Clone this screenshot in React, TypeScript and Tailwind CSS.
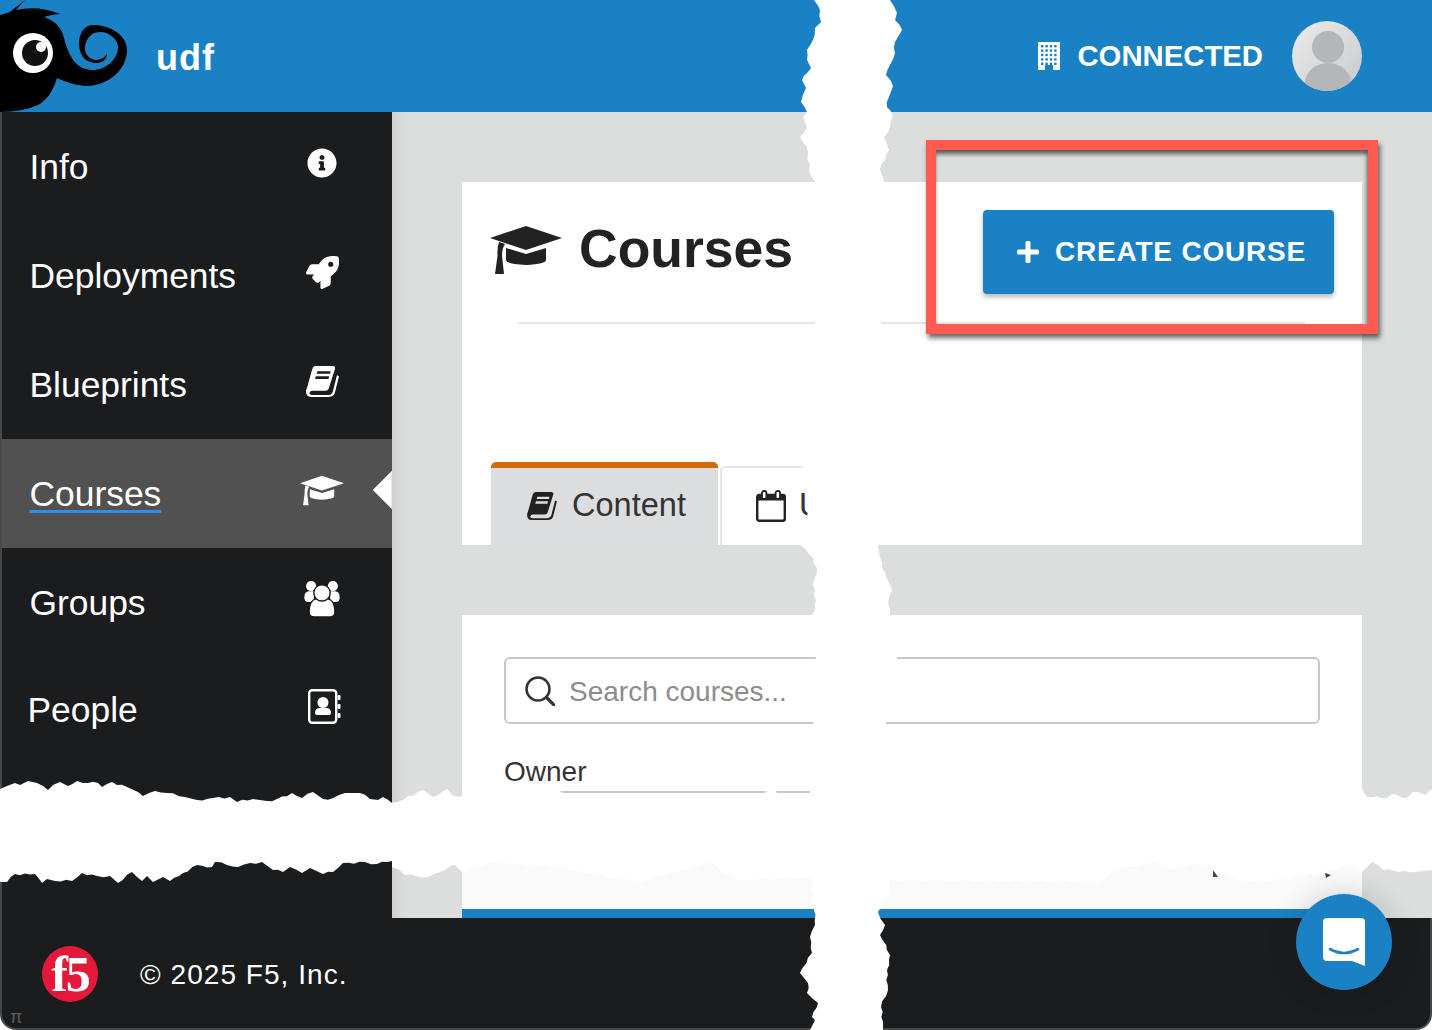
import { FaInfoCircle, FaRocket } from "react-icons/fa";
import type { ReactNode } from "react";

/* Screenshot of the Courses page, annotated: red box over the create button, torn strips over the page. */

function Mascot() {
  return (
    <svg viewBox="0 0 130 112" className="h-[112px] w-[130px] shrink-0">
      <path
        fill="#000"
        d="M0 15L10 12L16 7L25 0L16 10Q38 5 60 14Q50 15 44 17Q60 22 64 38C70 62 80 70 93 70C105 70 118 60 118 47C118 40 110 32 100 32C92 32 86 38 85 47C84 52 88 59 95 60C100 60 105 58 107 53C107 62 100 63 95 63C85 62 79 55 79 43C79 33 85 25 93 25C110 25 127 35 127 50C127 72 105 86 87 86C80 86 70 84 57 78Q52 96 40 104Q24 112 0 112Z"
      />
      <circle cx="33" cy="53" r="20" fill="#fff" />
      <circle cx="35" cy="53" r="13" fill="#111" />
      <circle cx="41" cy="47" r="5" fill="#fff" />
    </svg>
  );
}

function BuildingIcon() {
  const dots = [];
  for (let r = 0; r < 5; r++) {
    for (let c = 0; c < 4; c++) {
      dots.push(<rect key={`${r}-${c}`} x={3 + c * 4.4} y={3 + r * 4.4} width="2.4" height="2.4" fill="#1a82c4" />);
    }
  }
  return (
    <svg viewBox="0 0 22 28" className="h-[28px] w-[22px] shrink-0">
      <rect width="22" height="28" fill="#fff" />
      {dots}
      <rect x="7" y="23" width="8" height="5" fill="#1a82c4" />
    </svg>
  );
}

function BookIcon({ className }: { className: string }) {
  return (
    <svg viewBox="0 0 32 30" className={className}>
      <path
        fill="currentColor"
        fillRule="evenodd"
        d="M9 0H26Q29 0 28 3L22 22Q21 24 19 24H6Q4 24 3.5 26Q3 28 6 28H22Q25 28 26 25L30 9L32 10L28 26Q27 30 22 30H5Q0 30 0 25Q0 23 1 21L6 3Q7 0 9 0ZM11 5L10.3 7.5H23.3L24 5ZM9.5 10L8.8 12.5H21.8L22.5 10Z"
      />
    </svg>
  );
}

function CapIcon({ className }: { className: string }) {
  return (
    <svg viewBox="0 0 72 48" className={className}>
      <path fill="currentColor" d="M36 0L72 12L36 24L0 12Z" />
      <path fill="currentColor" d="M16 22L36 28L56 22V34Q56 38 36 39Q16 38 16 34Z" />
      <path fill="currentColor" d="M9 16L15 18Q12 22 12 30L14 48H5L7.5 30Q7 22 9 16Z" />
    </svg>
  );
}

function GroupIcon() {
  return (
    <svg viewBox="0 0 104 106" className="h-[36px] w-[38px]">
      <circle cx="20" cy="15" r="15" fill="#fff" />
      <circle cx="84" cy="15" r="15" fill="#fff" />
      <path fill="#fff" d="M0 48Q0 32 12 30H28V62H10Q0 62 0 48Z" />
      <path fill="#fff" d="M104 48Q104 32 92 30H76V62H94Q104 62 104 48Z" />
      <path
        fill="#fff"
        stroke="#1b1c1e"
        strokeWidth="4"
        d="M14 92Q14 56 36 52H68Q90 56 90 92Q90 106 74 106H30Q14 106 14 92Z"
      />
      <circle cx="52" cy="35" r="24" fill="#fff" stroke="#1b1c1e" strokeWidth="4" />
    </svg>
  );
}

function ContactIcon() {
  return (
    <svg viewBox="0 0 33 35" className="ml-[4px] h-[35px] w-[33px]">
      <rect x="1.2" y="1.2" width="27" height="32.6" rx="3" fill="none" stroke="#fff" strokeWidth="2.4" />
      <circle cx="15" cy="13.5" r="5.5" fill="#fff" />
      <path fill="#fff" d="M7 24Q7 19 12 19H18Q23 19 23 24Q23 26 21 26H9Q7 26 7 24Z" />
      <rect x="29.5" y="6" width="3" height="5" rx="1" fill="#fff" />
      <rect x="29.5" y="15" width="3" height="5" rx="1" fill="#fff" />
      <rect x="29.5" y="24" width="3" height="5" rx="1" fill="#fff" />
    </svg>
  );
}

function CalendarIcon() {
  return (
    <svg viewBox="0 0 30 32" className="h-[32px] w-[30px] shrink-0">
      <rect x="1.2" y="5" width="27.6" height="25.8" rx="2" fill="#fff" stroke="#222" strokeWidth="2.4" />
      <rect x="1" y="5" width="28" height="5.5" fill="#222" />
      <rect x="6" y="1" width="4.4" height="8" rx="2" fill="#fff" stroke="#222" strokeWidth="1.8" />
      <rect x="19.6" y="1" width="4.4" height="8" rx="2" fill="#fff" stroke="#222" strokeWidth="1.8" />
    </svg>
  );
}

function NavRow({ label, icon, active, className = "" }: { label: string; icon: ReactNode; active?: boolean; className?: string }) {
  return (
    <div className={`relative flex h-[109px] items-center justify-between pl-[27.5px] pr-[40px] ${active ? "bg-[#515151]" : ""}`}>
      <span className={`pt-[2px] text-[35.4px] leading-none text-white ${className} ${active ? "underline decoration-[#2f8fe8] decoration-[3px] underline-offset-[4px]" : ""}`}>
        {label}
      </span>
      <span className="flex w-[60px] items-center justify-center pb-[7px] text-white">{icon}</span>
      {active && (
        <svg viewBox="0 0 20 38" className="absolute right-0 top-[32px] h-[38px] w-[20px]">
          <path d="M20 0L1 19L20 38Z" fill="#fff" stroke="#cfcfcf" strokeWidth="1" />
        </svg>
      )}
    </div>
  );
}

function Sidebar() {
  return (
    <aside className="w-[392px] shrink-0 border-l-2 border-[#47484a] bg-[#1b1c1e]">
      <NavRow label="Info" icon={<FaInfoCircle size={30} />} />
      <NavRow label="Deployments" icon={<FaRocket size={33} />} />
      <NavRow label="Blueprints" icon={<BookIcon className="h-[31px] w-[33px]" />} />
      <NavRow label="Courses" active icon={<CapIcon className="h-[31px] w-[44px]" />} />
      <NavRow label="Groups" icon={<GroupIcon />} />
      <NavRow label="People" className="-ml-[2px] -mt-[4px]" icon={<div className="-mt-[4px]"><ContactIcon /></div>} />
    </aside>
  );
}

function CoursesCard() {
  return (
    <section className="flex h-[363px] flex-col bg-white">
      <div className="flex items-start justify-between px-[28px] pt-[28px]">
        <div className="flex h-[80px] items-center gap-[17px] text-[#222]">
          <CapIcon className="h-[48px] w-[72px]" />
          <h1 className="-mt-[2px] text-[53.5px] font-bold leading-none">Courses</h1>
        </div>
        <button className="flex h-[84px] w-[351px] items-center gap-[16px] rounded-[4px] bg-[#1a82c4] pl-[34px] text-[28px] font-bold tracking-[0.8px] text-white shadow-[0_3px_5px_rgba(0,0,0,0.28)]">
          <svg viewBox="0 0 22 22" className="h-[22px] w-[22px] shrink-0">
            <path fill="#fff" d="M8.5 1.5Q8.5 0 10 0H12Q13.500 0 13.500 1.500V8.500H20.500Q22 8.500 22 10V12Q22 13.500 20.500 13.500H13.500V20.500Q13.500 22 12 22H10Q8.500 22 8.500 20.500V13.500H1.500Q0 13.500 0 12V10Q0 8.500 1.500 8.500H8.500Z" />
          </svg>
          CREATE COURSE
        </button>
      </div>
      <div className="ml-[56px] mr-[57px] mt-[28px] h-[2px] bg-[#e6e6e6]" />
      <div className="mt-auto flex items-end pl-[29px] text-[#333]">
        <div className="flex h-[83px] w-[227px] items-center justify-center gap-[15px] rounded-t-[5px] border-t-[6px] border-[#d46b0a] bg-[#dcddde] pb-[2px] pl-[4px] text-[32.5px] leading-none">
          <BookIcon className="h-[28px] w-[30px] text-[#222]" />
          Content
        </div>
        <div className="ml-[2px] flex h-[79px] w-[140px] items-center gap-[13px] rounded-tl-[5px] border-l-2 border-t-2 border-[#e5e5e5] pb-[2px] pl-[34px] text-[32.5px] leading-none">
          <CalendarIcon />
          Use
        </div>
      </div>
    </section>
  );
}

function SearchCard() {
  return (
    <section className="mt-[70px] flex flex-1 flex-col border-b-[9px] border-[#1a82c4] bg-white pt-[42px]">
      <div className="mx-[42px] flex h-[67px] items-center gap-[14px] rounded-[6px] border-2 border-[#c8c8c8] pl-[19px]">
        <svg viewBox="0 0 30 30" className="h-[30px] w-[30px] shrink-0">
          <circle cx="13" cy="13" r="11.5" fill="none" stroke="#333" strokeWidth="2.5" />
          <path d="M21.5 21.5L29 29" stroke="#333" strokeWidth="3.2" strokeLinecap="round" />
        </svg>
        <span className="pt-[2px] text-[28px] leading-none text-[#8c8c8c]">Search courses...</span>
      </div>
      <div className="mx-[42px] mt-[32px] text-[28px] leading-[32px] text-[#333]">Owner</div>
      <div className="mx-[42px] mt-[3px] h-[2px] bg-[#c8c8c8]" />
      <div className="mt-auto h-[50px] bg-[#fafafa]" />
    </section>
  );
}

const HORIZONTAL_TEAR =
  "0,789 7,786 15,783 20,785 28,781 37,783 43,786 48,790 53,785 60,782 68,786 77,781 83,783 98,783 102,787 112,782 117,785 127,787 138,792 143,796 155,791 167,793 185,797 197,800 213,798 230,797 237,802 253,799 267,801 277,799 292,793 302,798 313,792 323,799 333,798 345,793 360,793 370,799 378,800 383,797 392,803 403,800 423,790 433,797 447,789 453,796 462,797 500,789 558,790 563,793 765,793 767,790 775,790 777,793 815,793 890,788 1362,789 1367,797 1387,798 1392,794 1407,798 1413,792 1425,795 1432,789 1432,870 1415,872 1383,870 1372,862 1362,872 1350,865 1320,873 1280,880 1243,882 1193,863 1173,870 1153,862 1113,872 1100,882 890,880 810,877 737,880 710,863 637,882 560,868 493,862 462,872 455,865 440,872 427,877 405,875 400,870 392,867 392,861 377,864 365,862 343,863 333,872 323,874 310,868 302,873 290,867 283,872 273,870 262,862 250,863 238,867 227,865 215,862 212,867 197,865 183,873 170,881 163,877 153,882 147,876 142,881 132,872 118,883 110,876 97,876 82,873 72,881 55,881 47,879 42,883 35,874 15,874 7,882 0,882";

const VERTICAL_TEAR =
  "814,0 820,10 821,22 815,28 812,42 807,50 807,60 811,68 802,80 806,88 801,102 807,112 803,117 807,127 800,137 807,147 809,170 815,182 815,323 803,440 802,470 807,488 807,522 800,545 813,558 817,573 814,580 815,610 812,615 816,657 813,723 810,792 812,880 814,910 815,925 810,937 812,953 800,973 808,983 807,993 818,1003 812,1017 815,1020 810,1030 883,1030 883,1027 881,1007 888,990 887,970 890,955 880,935 885,925 878,912 887,897 890,880 885,800 886,723 897,658 890,615 888,603 892,590 885,573 880,558 878,545 881,323 884,182 880,170 889,150 884,137 890,127 893,115 887,107 889,97 893,86 886,75 890,65 895,53 895,42 902,30 895,20 897,13 890,0";

// adds small teeth between the traced points so the edge reads as torn paper, not as a polyline
function roughen(points: string, vertical: boolean) {
  const pts = points.split(" ").map((p) => p.split(",").map(Number));
  const out: string[] = [];
  pts.forEach(([x, y], i) => {
    out.push(`${x},${y}`);
    const [nx, ny] = pts[(i + 1) % pts.length];
    const steps = Math.floor(Math.hypot(nx - x, ny - y) / 5);
    // the line at y=792 and the page edges stay as they are
    if (y === 793 && ny === 793) return;
    if (x === 0 || x === 1432) return;
    for (let s = 1; s < steps; s++) {
      const t = s / steps;
      const jag = ((i * 7 + s * 13) % 5) * 0.6 - 1.2;
      out.push(vertical ? `${x + (nx - x) * t + jag},${y + (ny - y) * t}` : `${x + (nx - x) * t},${y + (ny - y) * t + jag}`);
    }
  });
  return out.join(" ");
}

function TornStrips() {
  return (
    <svg viewBox="0 0 1432 1030" className="pointer-events-none absolute inset-0 h-[1030px] w-[1432px]">
      <path fill="#444" d="M1213 870L1218 877L1213 877ZM1268 873L1272 878L1265 878ZM1325 873L1331 875L1326 878Z" />
      <polygon fill="#fff" points={roughen(HORIZONTAL_TEAR, false)} />
      <polygon fill="#fff" points={roughen(VERTICAL_TEAR, true)} />
    </svg>
  );
}

export default function App() {
  return (
    <div className="relative flex h-[1030px] w-[1432px] flex-col overflow-hidden bg-white font-['Liberation_Sans',Arial,sans-serif]">
      <header className="flex h-[112px] shrink-0 items-center bg-[#1a82c4] pr-[70px] text-white">
        <Mascot />
        <span className="ml-[26px] mt-[3px] text-[36px] font-bold leading-none tracking-[1px]">udf</span>
        <div className="ml-auto flex items-center">
          <BuildingIcon />
          <span className="ml-[17px] text-[29.3px] font-bold leading-none">CONNECTED</span>
          <div className="ml-[29px] h-[70px] w-[70px] overflow-hidden rounded-full bg-linear-to-br from-[#ebebec] to-[#c9cacb]">
            <svg viewBox="0 0 70 70" className="h-[70px] w-[70px]">
              <circle cx="36" cy="26" r="16" fill="#b5b6b8" />
              <ellipse cx="36" cy="62" rx="23" ry="20" fill="#b5b6b8" />
            </svg>
          </div>
        </div>
      </header>

      <div className="flex h-[806px] shrink-0">
        <Sidebar />
        <main className="relative flex flex-1 flex-col bg-[#dcdedd] px-[70px] pt-[70px]">
          <div className="absolute bottom-0 left-0 top-0 w-[14px] bg-linear-to-r from-[#cfd0cf] to-transparent" />
          <CoursesCard />
          <SearchCard />
        </main>
      </div>

      <footer className="relative flex flex-1 items-center gap-[42px] rounded-b-[16px] border-x-2 border-b-2 border-[#47484a] bg-[#1b1c1e] pl-[40px] text-white">
        <div className="mt-[2px] flex h-[56px] w-[56px] items-center justify-center rounded-full bg-[#e4193a] font-['Liberation_Serif',serif] text-[50px] font-bold leading-none tracking-[-2px]">
          f5
        </div>
        <span className="pt-[3px] text-[28px] leading-none tracking-[1.05px]">© 2025 F5, Inc.</span>
        <span className="absolute bottom-[2px] left-[8px] text-[18px] leading-none text-[#5a5a5a]">π</span>
      </footer>

      <TornStrips />

      {/* annotation around the button */}
      <div className="pointer-events-none absolute left-[926px] top-[140px] h-[194px] w-[452px] border-[10px] border-[#ff5a4f] shadow-[2px_4px_5px_rgba(0,0,0,0.6),inset_-1px_4px_4px_rgba(0,0,0,0.6)]" />

      <button className="absolute bottom-[40px] right-[40px] flex h-[96px] w-[96px] items-center justify-center rounded-full bg-[#1a82c4] shadow-[0_0_30px_rgba(0,0,0,0.18)]">
        <svg viewBox="0 0 42 48" className="h-[48px] w-[42px]">
          <path fill="#fff" d="M4 0H38Q42 0 42 4V48L29 43H4Q0 43 0 39V4Q0 0 4 0Z" />
          <path fill="none" stroke="#1a82c4" strokeWidth="2.6" strokeLinecap="round" d="M7 31Q21 39 35 31" />
        </svg>
      </button>
    </div>
  );
}
